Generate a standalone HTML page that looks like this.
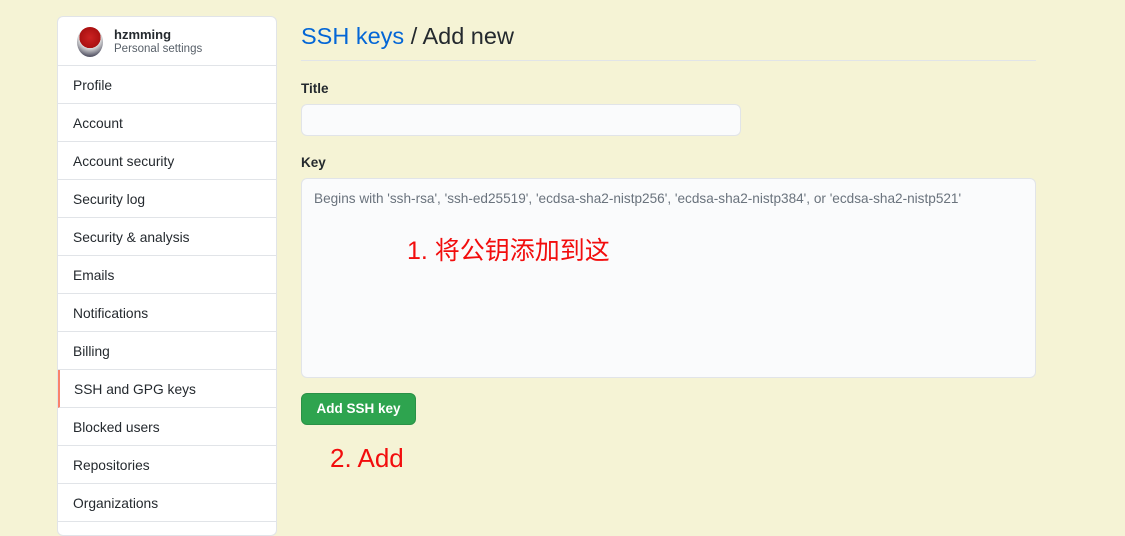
<!DOCTYPE html>
<html><head><meta charset="utf-8"><style>
*{box-sizing:border-box;margin:0;padding:0}
body{width:1125px;height:517px;overflow:hidden;background:#f5f3d5;font-family:"Liberation Sans","Noto Sans CJK SC",sans-serif;color:#24292e;position:relative}
.side{position:absolute;left:57px;top:16px;width:220px;height:520px;background:#fff;border:1px solid #e1e4e8;border-radius:6px;overflow:hidden}
.hd{height:49px;border-bottom:1px solid #e1e4e8;position:relative}
.av{position:absolute;left:19px;top:10px;width:26px;height:30px;border-radius:50%;background:radial-gradient(circle at 50% 35%,#c22 0,#a11 45%,#ddd 46%,#556 80%)}
.nm{position:absolute;left:56px;top:10px;font-size:13px;font-weight:bold}
.ps{position:absolute;left:56px;top:26px;font-size:11.5px;color:#586069}
.it{height:38px;border-bottom:1px solid #e1e4e8;padding-left:15px;line-height:39px;font-size:13.8px}
.it.a{border-left:2px solid #f9826c;padding-left:14px}
h1{position:absolute;left:301px;top:23px;font-weight:normal;font-size:23.5px}
h1 span{color:#0366d6}
.hr{position:absolute;left:301px;top:60px;width:735px;border-top:1px solid #e1e4e8}
.lb{position:absolute;font-size:13.5px;font-weight:bold;left:301px}
.in{position:absolute;left:301px;top:104px;width:440px;height:32px;background:#fafbfc;border:1px solid #e1e4e8;border-radius:6px}
.ta{position:absolute;left:301px;top:178px;width:735px;height:200px;background:#fafbfc;border:1px solid #e1e4e8;border-radius:6px;padding:12px 12px;font-size:13.6px;color:#6a737d}
.btn{position:absolute;left:301px;top:393px;width:115px;height:32px;background:#2ea44f;border:1px solid #2a9147;border-radius:6px;color:#fff;font-weight:bold;font-size:13.5px;text-align:center;line-height:30px}
.r{position:absolute;color:#f20d0d;font-size:25px}
</style></head><body>
<div class="side">
<div class="hd"><div class="av"></div><div class="nm">hzmming</div><div class="ps">Personal settings</div></div>
<div class="it">Profile</div><div class="it">Account</div><div class="it">Account security</div><div class="it">Security log</div><div class="it">Security &amp; analysis</div><div class="it">Emails</div><div class="it">Notifications</div><div class="it">Billing</div><div class="it a">SSH and GPG keys</div><div class="it">Blocked users</div><div class="it">Repositories</div><div class="it">Organizations</div>
</div>
<h1><span>SSH keys</span> / Add new</h1>
<div class="hr"></div>
<div class="lb" style="top:81px">Title</div>
<div class="in"></div>
<div class="lb" style="top:155px">Key</div>
<div class="ta">Begins with 'ssh-rsa', 'ssh-ed25519', 'ecdsa-sha2-nistp256', 'ecdsa-sha2-nistp384', or 'ecdsa-sha2-nistp521'</div>
<div class="r" style="left:407px;top:231px">1. 将公钥添加到这</div>
<div class="btn">Add SSH key</div>
<div class="r" style="left:330px;top:443px;font-size:26px">2. Add</div>
</body></html>
